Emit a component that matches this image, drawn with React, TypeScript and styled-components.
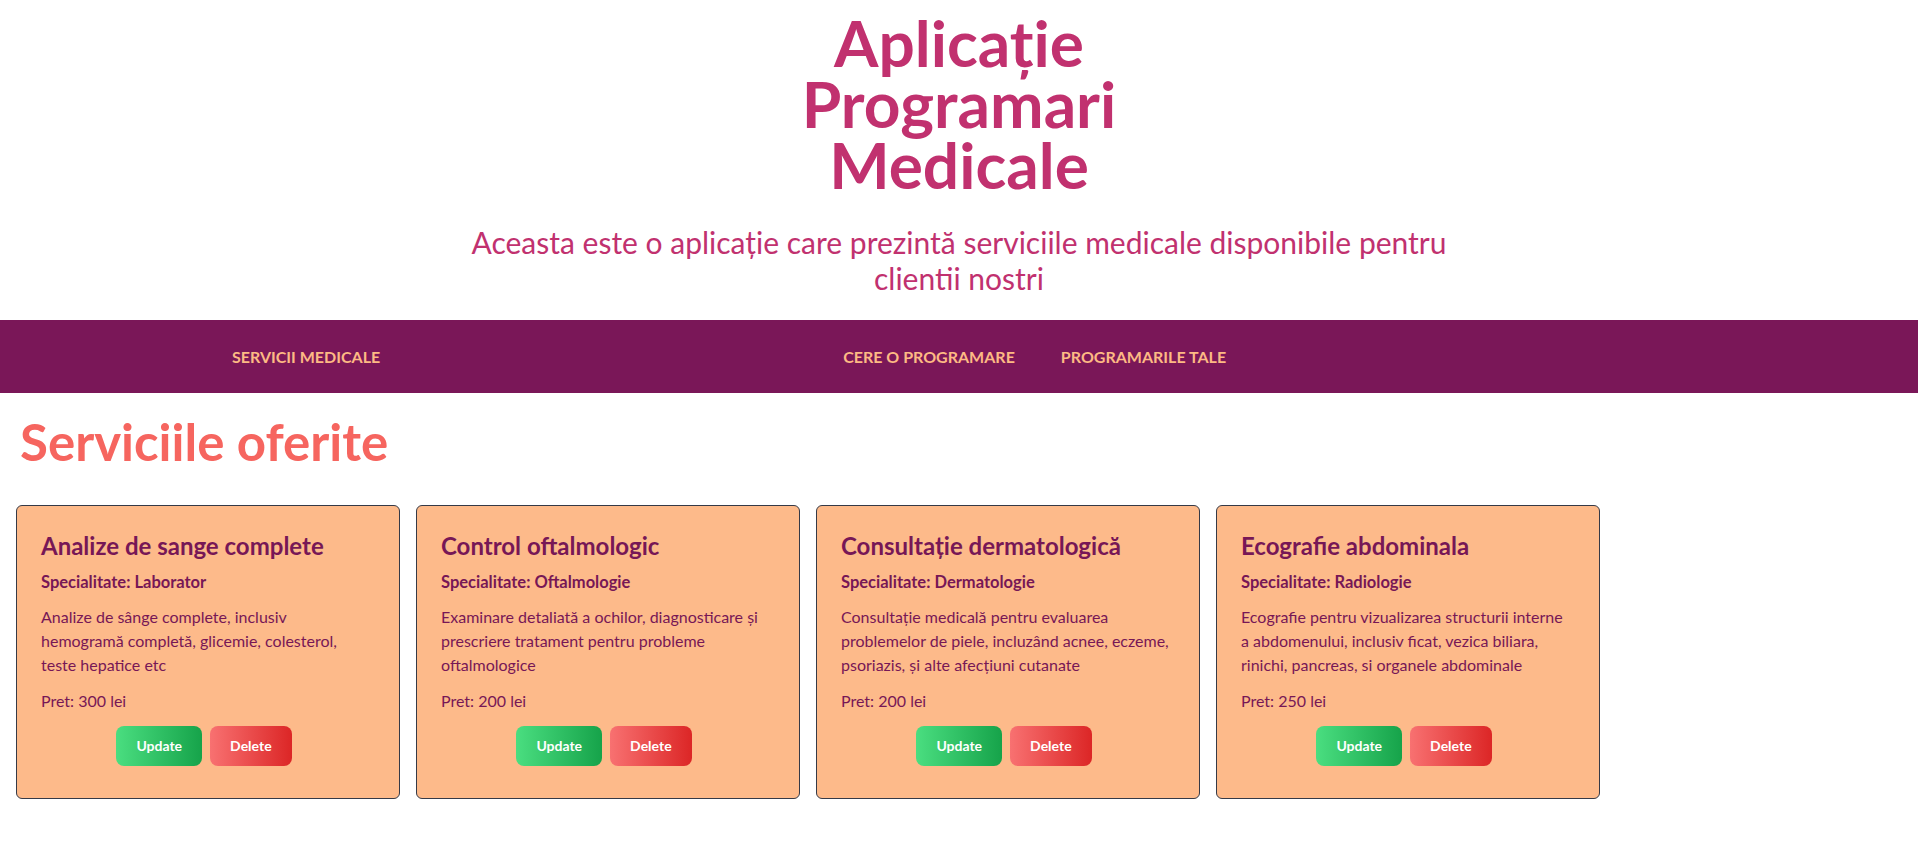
import React from "react";
import styled, { createGlobalStyle } from "styled-components";

const GlobalStyle = createGlobalStyle`
  * { box-sizing: border-box; }
  body {
    margin: 0;
    background: #ffffff;
    font-family: "Lato", "Open Sans", sans-serif;
  }
`;

const Header = styled.header`
  display: flex;
  flex-direction: column;
  align-items: center;
  padding-top: 12px;
`;

const Title = styled.h1`
  margin: 0;
  max-width: 440px;
  text-align: center;
  font-size: 64px;
  line-height: 61px;
  font-weight: 700;
  color: #c1316f;
`;

const Subtitle = styled.p`
  margin: 29px 0 0;
  max-width: 1024px;
  text-align: center;
  font-size: 30px;
  line-height: 36px;
  font-weight: 400;
  color: #c1316f;
`;

const Nav = styled.nav`
  margin-top: 24px;
  height: 73px;
  background: #7a1758;
  display: flex;
  align-items: center;
  padding-left: 232px;
`;

const NavGroup = styled.div`
  display: flex;
  align-items: center;
  gap: 46px;
  margin-left: 463px;
`;

const NavLink = styled.a`
  font-size: 16px;
  line-height: 24px;
  font-weight: 700;
  color: #fdba84;
  text-transform: uppercase;
  text-decoration: none;
  white-space: nowrap;
  cursor: pointer;
`;

const Main = styled.main`
  padding: 24px 0 40px;
`;

const SectionTitle = styled.h2`
  margin: 0 0 38px;
  padding-left: 20px;
  font-size: 51px;
  line-height: 50px;
  font-weight: 700;
  color: #f6655f;
`;

const CardList = styled.div`
  display: flex;
  flex-wrap: wrap;
  gap: 16px;
  padding-left: 16px;
`;

const Card = styled.article`
  width: 384px;
  padding: 24px;
  background: #fdba8a;
  border: 1px solid #353a47;
  border-radius: 6px;
  color: #771756;
`;

const CardTitle = styled.h3`
  margin: 0 0 8px;
  font-size: 24px;
  line-height: 32px;
  font-weight: 700;
  white-space: nowrap;
`;

const Specialty = styled.p`
  margin: 0 0 11px;
  font-size: 16.5px;
  line-height: 24px;
  font-weight: 700;
`;

const Description = styled.p`
  margin: 0 0 12px;
  font-size: 16px;
  line-height: 24px;
  font-weight: 400;
  white-space: pre-line;
`;

const Price = styled.p`
  margin: 0;
  font-size: 16px;
  line-height: 24px;
  font-weight: 400;
`;

const Actions = styled.div`
  display: flex;
  justify-content: center;
  gap: 8px;
  margin: 13px 0 8px;
  padding-right: 8px;
`;

const ActionButton = styled.button<{ $variant: "update" | "delete" }>`
  height: 40px;
  padding: 0 20px;
  border: none;
  border-radius: 8px;
  font-family: "Lato", sans-serif;
  font-size: 14px;
  line-height: 20px;
  font-weight: 700;
  color: #ffffff;
  cursor: pointer;
  background: ${(p) =>
    p.$variant === "update"
      ? "linear-gradient(to right, #4ade80, #16a34a)"
      : "linear-gradient(to right, #f87171, #dc2626)"};
`;

type Service = {
  name: string;
  specialty: string;
  description: string;
  price: number;
};

const services: Service[] = [
  {
    name: "Analize de sange complete",
    specialty: "Laborator",
    description:
      "Analize de sânge complete, inclusiv\nhemogramă completă, glicemie, colesterol,\nteste hepatice etc",
    price: 300,
  },
  {
    name: "Control oftalmologic",
    specialty: "Oftalmologie",
    description:
      "Examinare detaliată a ochilor, diagnosticare și\nprescriere tratament pentru probleme\noftalmologice",
    price: 200,
  },
  {
    name: "Consultație dermatologică",
    specialty: "Dermatologie",
    description:
      "Consultație medicală pentru evaluarea\nproblemelor de piele, incluzând acnee, eczeme,\npsoriazis, și alte afecțiuni cutanate",
    price: 200,
  },
  {
    name: "Ecografie abdominala",
    specialty: "Radiologie",
    description:
      "Ecografie pentru vizualizarea structurii interne\na abdomenului, inclusiv ficat, vezica biliara,\nrinichi, pancreas, si organele abdominale",
    price: 250,
  },
];

export default function App() {
  return (
    <>
      <GlobalStyle />
      <Header>
        <Title>Aplicație Programari Medicale</Title>
        <Subtitle>
          Aceasta este o aplicație care prezintă serviciile medicale disponibile pentru clientii nostri
        </Subtitle>
      </Header>
      <Nav>
        <NavLink>Servicii medicale</NavLink>
        <NavGroup>
          <NavLink>Cere o programare</NavLink>
          <NavLink>Programarile tale</NavLink>
        </NavGroup>
      </Nav>
      <Main>
        <SectionTitle>Serviciile oferite</SectionTitle>
        <CardList>
          {services.map((s) => (
            <Card key={s.name}>
              <CardTitle>{s.name}</CardTitle>
              <Specialty>Specialitate: {s.specialty}</Specialty>
              <Description>{s.description}</Description>
              <Price>Pret: {s.price} lei</Price>
              <Actions>
                <ActionButton $variant="update">Update</ActionButton>
                <ActionButton $variant="delete">Delete</ActionButton>
              </Actions>
            </Card>
          ))}
        </CardList>
      </Main>
    </>
  );
}
